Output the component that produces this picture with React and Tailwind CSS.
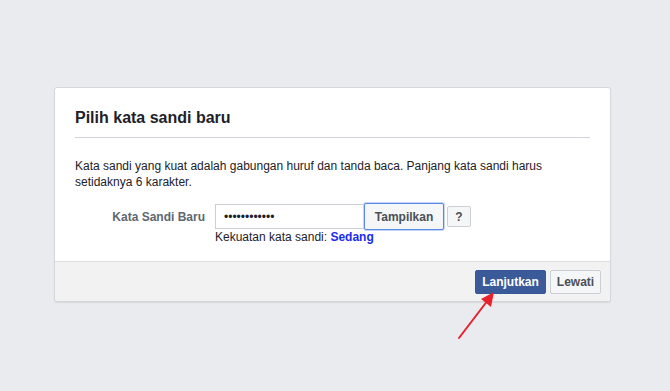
export default function App() {
  return (
    <div
      className="relative h-[391px] w-[670px] overflow-hidden bg-[#e9ebee] pl-[54px] pt-[87px] text-[12px] text-[#1d2129]"
      style={{ fontFamily: '"Liberation Sans", Arial, Helvetica, sans-serif' }}
    >
      <div className="w-[557px] rounded-[3px] border border-[#d3d6db] bg-white shadow-[0_1px_1px_rgba(0,0,0,0.08)]">
        <div className="px-5">
          <h2 className="border-b border-[#cfd2d6] pb-[9px] pt-[20px] text-[16px] font-bold leading-[20px] text-[#1d2129]">
            Pilih kata sandi baru
          </h2>
          <p className="mt-[20px] w-[490px] leading-[16px]">
            Kata sandi yang kuat adalah gabungan huruf dan tanda baca. Panjang kata sandi harus setidaknya 6 karakter.
          </p>
          <div className="mt-[13px] flex items-center">
            <label className="w-[130px] text-right font-bold text-[#606770]">Kata Sandi Baru</label>
            <input
              type="password"
              readOnly
              defaultValue="passwordbaru"
              className="ml-[10px] h-[25px] w-[149px] border border-[#ccd0d5] px-[8px] text-[12px] outline-none"
            />
            <button className="h-[27px] w-[80px] rounded-[2px] border border-[#5b87e6] bg-[#f5f6f7] font-bold text-[#4b4f56] shadow-[0_0_0_1px_#c5d5f8]">
              Tampilkan
            </button>
            <button className="ml-[3px] h-[21px] w-[24px] rounded-[2px] border border-[#ccd0d5] bg-[#f5f6f7] font-bold text-[#4b4f56]">
              ?
            </button>
          </div>
          <div className="-mt-[1px] ml-[140px] leading-[16px]">
            Kekuatan kata sandi: <span className="font-bold text-[#1a2bf2]">Sedang</span>
          </div>
          <div className="h-[16px]" />
        </div>
        <div className="flex h-[40px] justify-end gap-[4px] rounded-b-[3px] border-t border-[#dddfe2] bg-[#f2f2f2] pr-[9px] pt-[8px]">
          <button className="h-[24px] w-[71px] rounded-[2px] border border-[#365899] bg-[#3b5a9a] font-bold text-white">
            Lanjutkan
          </button>
          <button className="h-[24px] w-[51px] rounded-[2px] border border-[#ccd0d5] bg-[#f5f6f7] font-bold text-[#4b4f56]">
            Lewati
          </button>
        </div>
      </div>
      <svg className="absolute left-[450px] top-[285px]" width="56" height="60" viewBox="0 0 56 60">
        <line x1="9" y1="53" x2="38" y2="15" stroke="#e8212a" strokeWidth="2" strokeLinecap="round" />
        <polygon points="44,7 31,14 41,22" fill="#e8212a" />
      </svg>
    </div>
  );
}
